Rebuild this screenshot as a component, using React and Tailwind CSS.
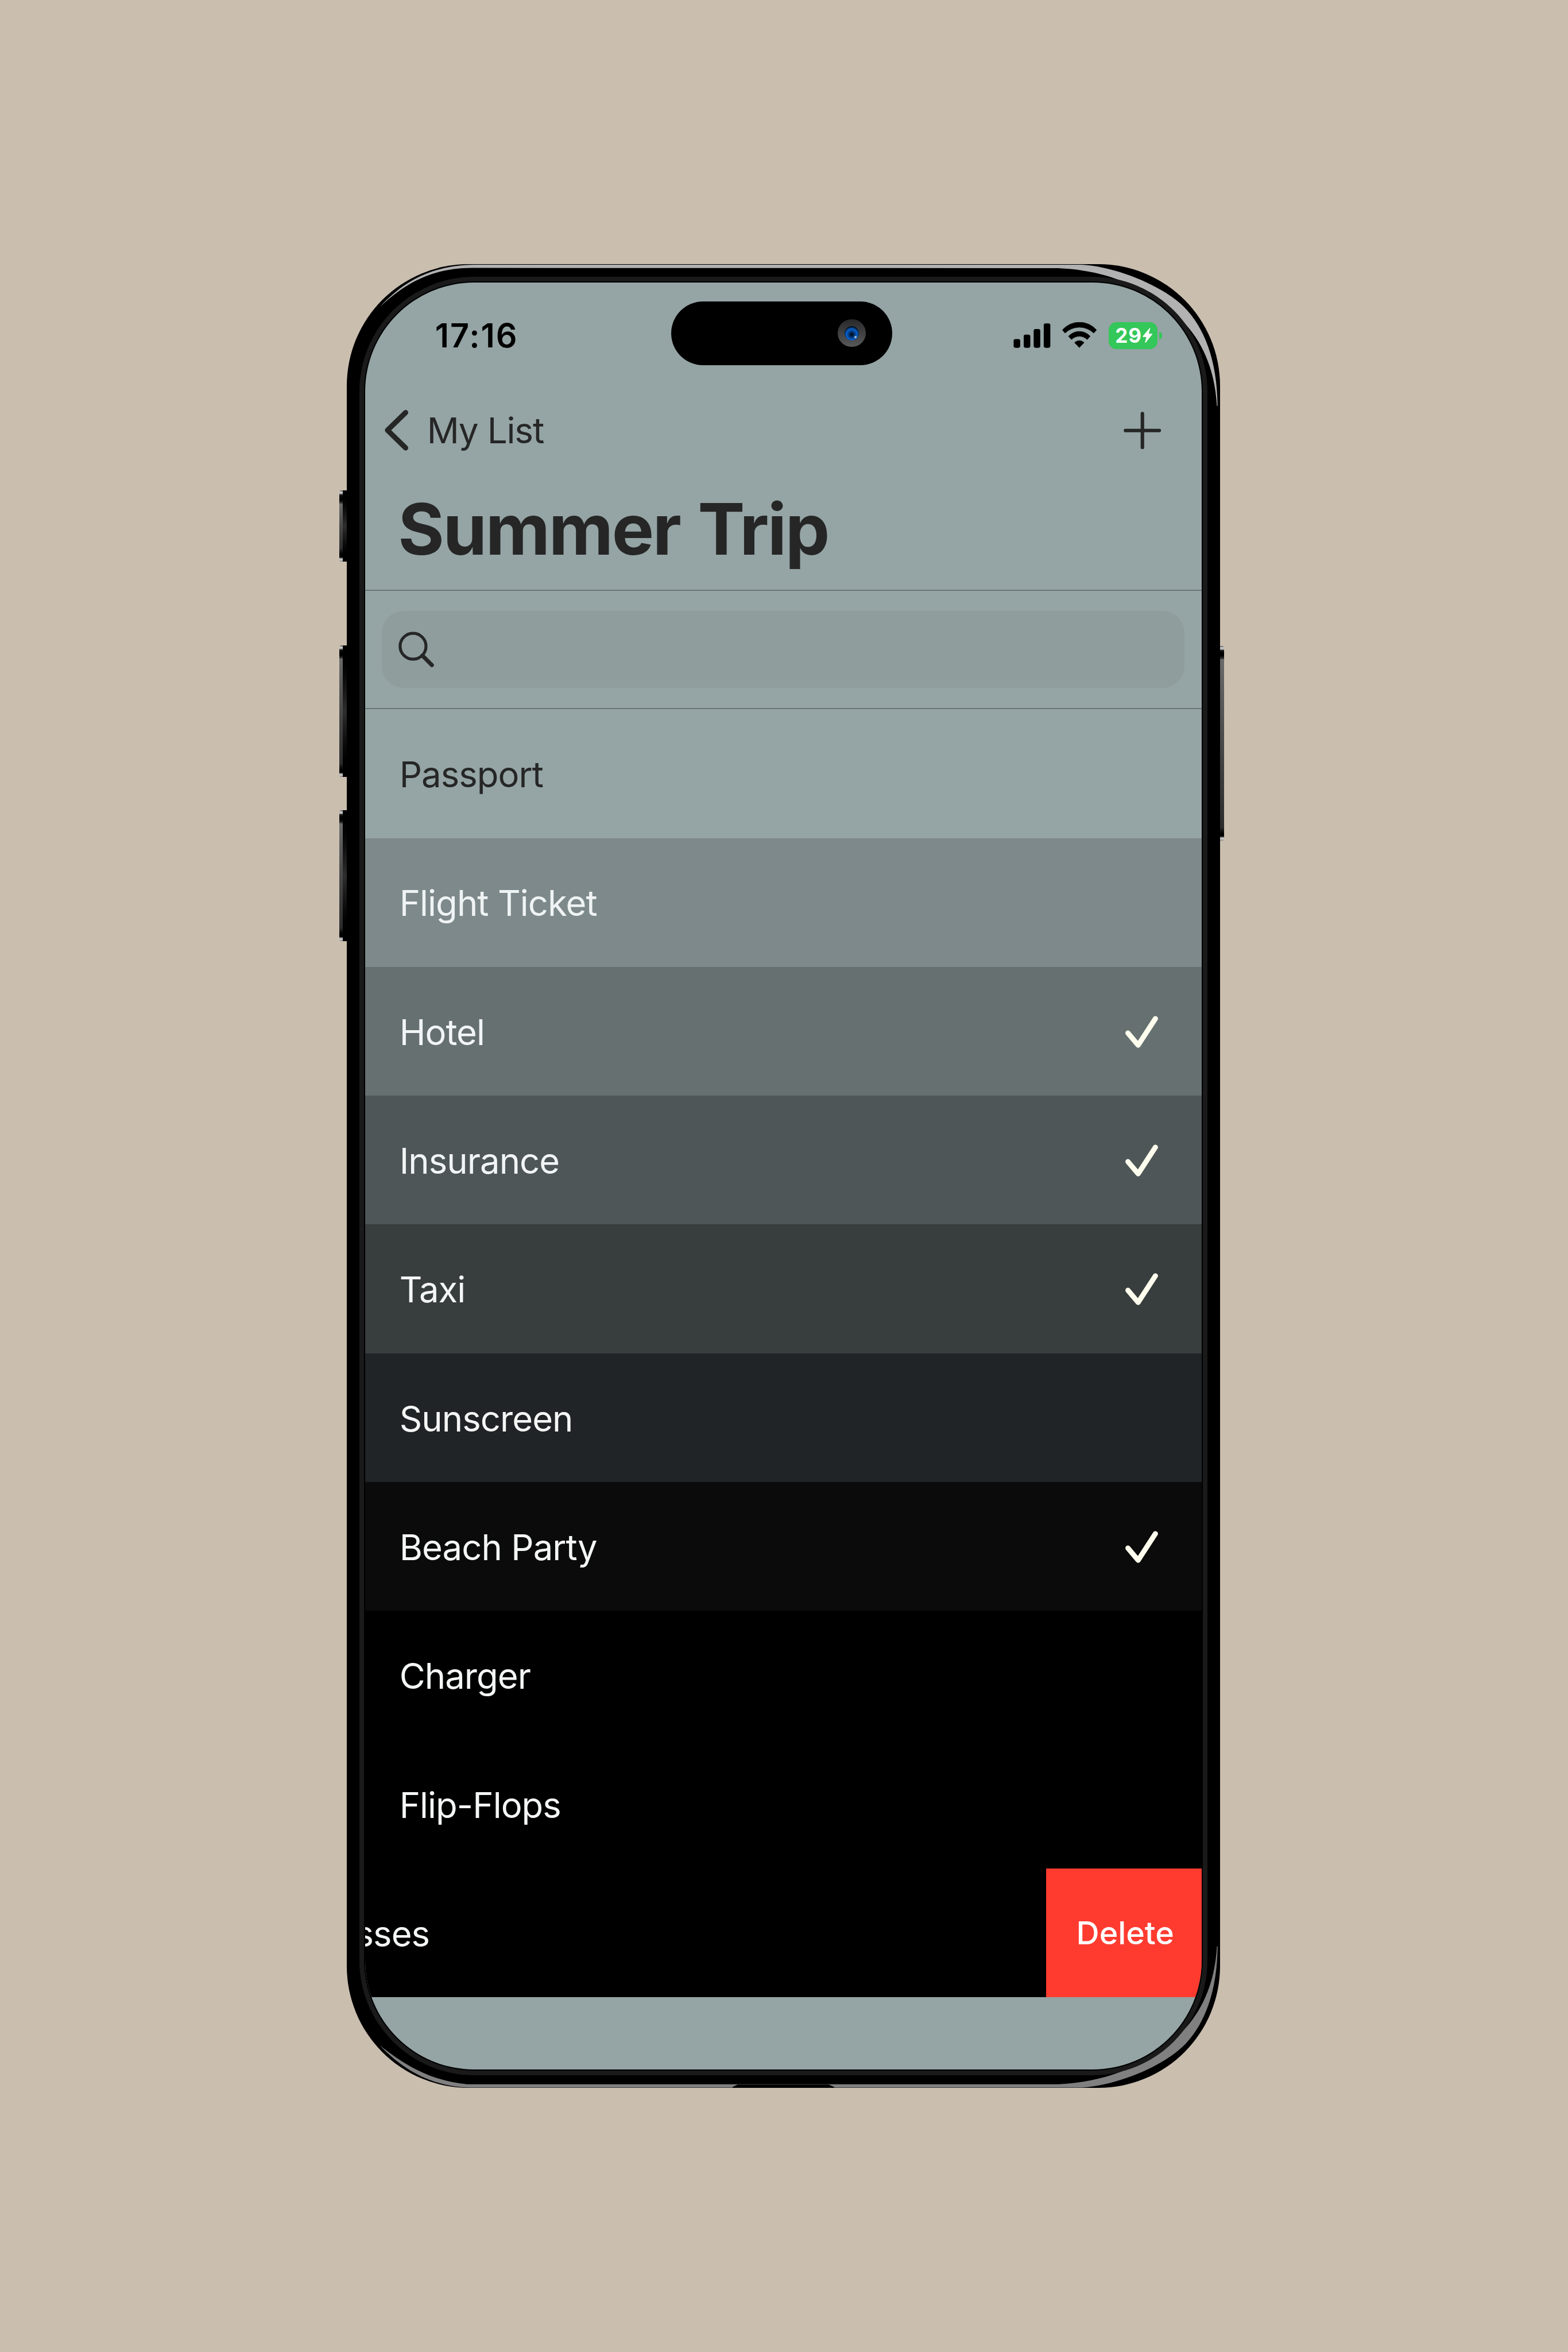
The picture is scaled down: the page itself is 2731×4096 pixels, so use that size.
const ITEMS = [
  { label: 'Passport', row: 'bg-[#95a4a4]', text: 'text-[#262626]' },
  { label: 'Flight Ticket', row: 'bg-[#7d898a]', text: 'text-[#eff3f3]' },
  { label: 'Hotel', row: 'bg-[#667070]', text: 'text-[#f2f5f5]', done: true },
  { label: 'Insurance', row: 'bg-[#4f5657]', text: 'text-[#f2f5f5]', done: true },
  { label: 'Taxi', row: 'bg-[#383d3d]', text: 'text-[#f4f6f6]', done: true },
  { label: 'Sunscreen', row: 'bg-[#212426]', text: 'text-[#f4f6f6]' },
  { label: 'Beach Party', row: 'bg-[#0b0b0b]', text: 'text-[#f4f6f6]', done: true },
  { label: 'Charger', row: 'bg-black', text: 'text-[#f4f6f6]' },
  { label: 'Flip-Flops', row: 'bg-black', text: 'text-[#f4f6f6]' },
];

function CheckIcon() {
  return (
    <svg viewBox="0 0 70 70" className="h-[57.3px] w-[57.3px]" fill="none" stroke="#fffeee" strokeWidth="11" strokeLinecap="round" strokeLinejoin="round">
      <path d="M5.6 36.7 L27.3 62.5 L64 6" />
    </svg>
  );
}

function SideButton({ className, shaded }) {
  return (
    <div className={`absolute flex flex-col overflow-hidden ${className}`}>
      <div className="h-[7px] bg-gradient-to-b from-[#555555] via-[#d8d8d8] to-[#777777]" />
      <div className="h-[16px] bg-gradient-to-b from-[#222222] via-black to-[#444444]" />
      <div className="flex-1 bg-gradient-to-b from-[#6a6a6a] via-[#484848] to-[#2c2c2c]" />
      <div className="h-[16px] bg-gradient-to-b from-[#2c2c2c] to-black" />
      <div className="h-[7px] bg-gradient-to-b from-[#555555] via-[#d8d8d8] to-[#777777]" />
      {shaded && <div className="absolute inset-y-0 right-0 w-[8px] bg-gradient-to-b from-black via-[#2e2e2e] to-black" />}
    </div>
  );
}

function FrameHighlights() {
  return (
    <svg viewBox="737 561.5 1857 3877.5" preserveAspectRatio="none" className="absolute inset-0 h-full w-full">
      <path fill="#b2b2b2" d="M808 651.5 C860 596 920 564 1008 562.7 H2300 C2375 567 2472 608 2516.7 651.7 C2560 695 2588 765 2588.7 863 H2587.3 C2583 780 2552 722 2516.7 685 C2455 622 2370 575 2250 570 L1003 569.5 C915 570 860 604 808 651.5Z" />
      <path fill="#808080" d="M807 4348 C858 4388 915 4424 993 4430.8 H2250 C2370 4425.5 2455 4378.5 2516.7 4315.5 C2552 4278.5 2583 4220.5 2587.3 4137.5 H2588.7 C2588 4235.5 2560 4305.5 2516.7 4348.8 C2472 4392.5 2375 4433.5 2300 4437.8 H1000 C915 4436 855 4398 807 4348Z" />
      <path fill="#000" d="M1568 4431.5 H1762 L1774 4437 L1772 4439 H1559 L1556.7 4437Z" />
    </svg>
  );
}

function Island() {
  return (
    <div className="absolute left-[533.3px] top-[32.8px] flex h-[111.4px] w-[385px] items-center justify-end rounded-full bg-black pr-[46px]">
      <div className="flex h-[48px] w-[49px] items-center justify-center rounded-full bg-gradient-to-b from-[#29292b] to-[#58595b]">
        <div className="relative size-[25px] rounded-full bg-[radial-gradient(circle_at_50%_58%,#020c1c_5%,#04428f_32%,#0861cc_50%,#020c18_72%)]">
          <div className="absolute right-[4px] bottom-[4px] size-[4px] rounded-full bg-[#a9c0cf]" />
        </div>
      </div>
    </div>
  );
}

function StatusBar() {
  return (
    <div className="flex h-[185px] items-center pl-[122px] pr-[68.5px]">
      <span className="text-[57.5px] leading-none font-semibold tracking-[2px] text-black">17:16</span>
      <svg viewBox="2154 684 80 56" className="ml-auto h-[45.9px] w-[65.5px]">
        <rect x="2154.5" y="720" width="14" height="18.5" rx="4" />
        <rect x="2176" y="710.4" width="14" height="28.1" rx="4" />
        <rect x="2197.2" y="698.5" width="14" height="40" rx="4" />
        <rect x="2218.6" y="686.6" width="14" height="51.9" rx="4" />
      </svg>
      <svg viewBox="2258 684 74 56" className="ml-[19.5px] h-[45.9px] w-[60.6px]" stroke="#000" strokeWidth="1" strokeLinejoin="round">
        <path d="M2258.5 700.7 A48 48 0 0 1 2331 700.7 L2325 707.2 A43.5 43.5 0 0 0 2264.2 707.2Z" />
        <path d="M2271.5 714 A31 31 0 0 1 2317.5 714 L2311.2 720.8 A24 24 0 0 0 2277.8 720.8Z" />
        <path d="M2284.5 727.7 A13.5 13.5 0 0 1 2304.5 727.7 L2294.5 738Z" />
      </svg>
      <div className="ml-[20px] flex items-center gap-[3.5px]">
        <div className="flex h-[47.2px] w-[85px] items-center rounded-[13.5px] bg-[#34c759] pl-[11.5px] text-white">
          <span className="w-[48px] text-[35px] leading-none font-bold tracking-[1px]">29</span>
          <svg viewBox="0 0 21 32" className="h-[26.2px] w-[17.2px]" fill="#fff" stroke="#fff" strokeWidth="1.5" strokeLinejoin="round">
            <path d="M15.5 1 L.8 18.4 L9 18.8 L6 31 L20.2 13.2 L12.3 12.8 Z" />
          </svg>
        </div>
        <div className="h-[13.5px] w-[5px] rounded-r-full bg-[#34c759]" />
      </div>
    </div>
  );
}

function NavBar() {
  return (
    <div className="flex h-[145px] items-center pl-[34px] pr-[70.5px]">
      <svg viewBox="0 0 50 86" className="h-[70.5px] w-[41px]" fill="none" stroke="#262626" strokeWidth="11" strokeLinecap="round" strokeLinejoin="round">
        <path d="M44.5 5.5 L6 43 L44.5 80.5" />
      </svg>
      <span className="ml-[33px] pt-[1px] text-[62px] leading-none tracking-[-1.2px] text-[#262626]">My List</span>
      <svg viewBox="0 0 80 80" className="ml-auto size-[65.5px]" fill="none" stroke="#262626" strokeWidth="7.5" strokeLinecap="round">
        <path d="M40 4 V76 M4 40 H76" />
      </svg>
    </div>
  );
}

function SearchBar() {
  return (
    <div className="flex h-[208.5px] items-center border-y-2 border-[#6b7777] px-[29.5px]">
      <div className="flex h-[134.4px] w-full items-center rounded-[38px] bg-[#8f9d9d] pl-[29px]">
        <svg viewBox="0 0 76 76" className="size-[62.3px]" fill="none" stroke="#262626" strokeLinecap="round">
          <circle cx="31" cy="31" r="27.5" strokeWidth="6.3" />
          <path d="M51 51 L71 71" strokeWidth="8.5" />
        </svg>
      </div>
    </div>
  );
}

function ListRow({ item }) {
  return (
    <div className={`flex h-[224.3px] items-center justify-between pt-[3px] pl-[60px] pr-[75.5px] ${item.row}`}>
      <span className={`text-[61.5px] leading-none tracking-[-0.9px] ${item.text}`}>{item.label}</span>
      {item.done && <CheckIcon />}
    </div>
  );
}

function SwipedRow() {
  return (
    <div className="flex h-[224.3px] items-stretch justify-between overflow-hidden bg-black">
      <div className="flex w-[112.5px] items-center justify-end pt-[3px]">
        <span className="text-[61.5px] leading-none tracking-[-0.9px] whitespace-nowrap text-[#f4f6f6]">Sunglasses</span>
      </div>
      <div className="flex w-[270.6px] items-center bg-[#ff3b30] pl-[52.5px]">
        <span className="text-[55.5px] leading-none font-medium text-white">Delete</span>
      </div>
    </div>
  );
}

export default function App() {
  return (
    <div className="h-[4096px] w-[2731px] overflow-hidden bg-[#cabeaf] pt-[459.8px] pl-[603.7px] font-['Inter',sans-serif]">
      <div className="relative h-[3176.5px] w-[1521px]">
        <SideButton shaded className="left-[-12.5px] top-[394px] h-[124px] w-[14px] rounded-l-[4px]" />
        <SideButton shaded className="left-[-12.5px] top-[664px] h-[229px] w-[14px] rounded-l-[4px]" />
        <SideButton shaded className="left-[-12.5px] top-[951px] h-[228px] w-[14px] rounded-l-[4px]" />
        <SideButton className="right-[-7px] top-[665px] h-[339px] w-[9px] rounded-r-[4px]" />
        <div className="relative h-full w-full rounded-[212px] bg-black p-[22px]">
          <FrameHighlights />
          <div className="relative h-full w-full rounded-[200px] bg-[#1a1a1a] p-[8px]">
            <div className="h-full w-full rounded-[192px] bg-black p-[2px]">
              <div className="relative h-full w-full overflow-hidden rounded-[190px] bg-[#95a4a4]">
                <Island />
                <StatusBar />
                <NavBar />
                <div className="flex h-[205px] items-center pb-[5.4px] pl-[57.5px]">
                  <h1 className="text-[123.2px] leading-none font-bold tracking-[-2.4px] [word-spacing:4px] text-[#262626]">Summer Trip</h1>
                </div>
                <SearchBar />
                {ITEMS.map((item) => (
                  <ListRow key={item.label} item={item} />
                ))}
                <SwipedRow />
              </div>
            </div>
          </div>
        </div>
      </div>
    </div>
  );
}
